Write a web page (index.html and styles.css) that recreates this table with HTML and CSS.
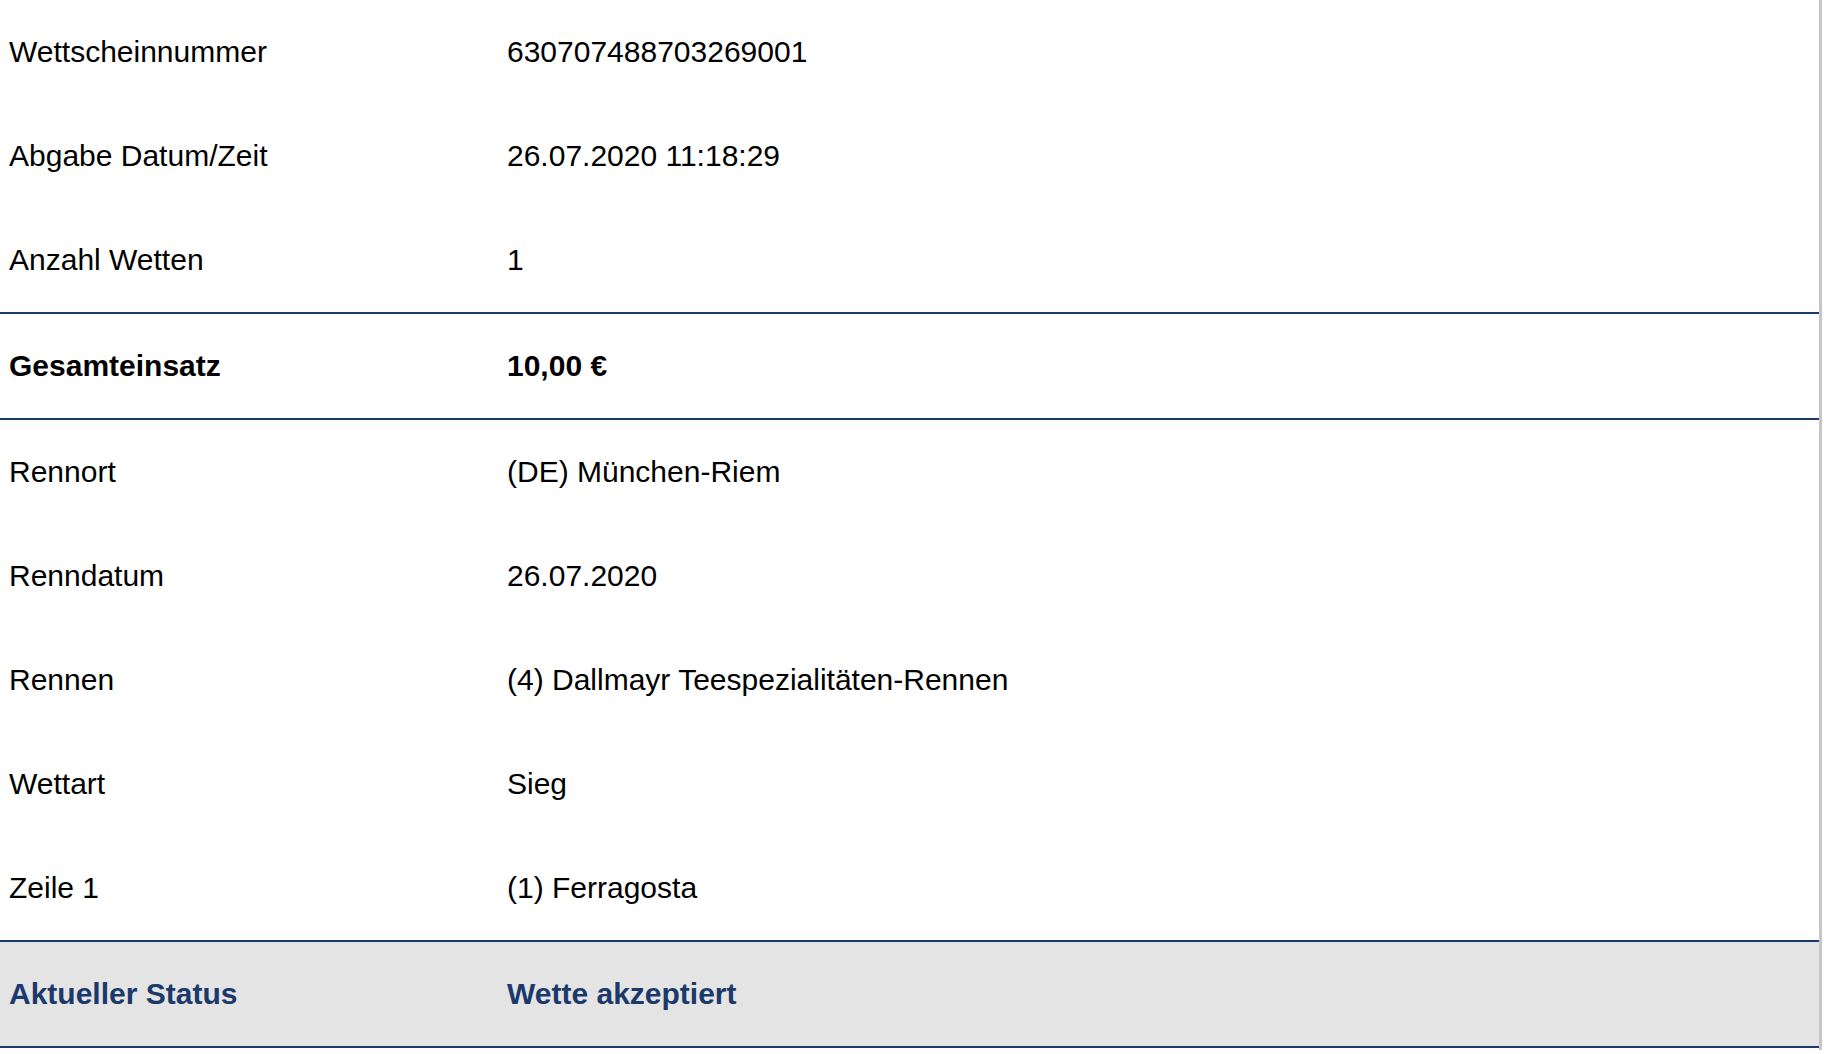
FILE: index.html
```html
<!DOCTYPE html>
<html lang="de">
<head>
<meta charset="utf-8">
<title>Wettschein</title>
<link rel="stylesheet" href="styles.css">
</head>
<body>
<div class="sheet">
  <div class="group">
    <div class="row"><span class="cell">Wettscheinnummer</span><span class="cell">630707488703269001</span></div>
    <div class="row"><span class="cell">Abgabe Datum/Zeit</span><span class="cell">26.07.2020 11:18:29</span></div>
    <div class="row"><span class="cell">Anzahl Wetten</span><span class="cell">1</span></div>
  </div>
  <div class="group ruled">
    <div class="row strong"><span class="cell">Gesamteinsatz</span><span class="cell">10,00 €</span></div>
  </div>
  <div class="group ruled">
    <div class="row"><span class="cell">Rennort</span><span class="cell">(DE) München-Riem</span></div>
    <div class="row"><span class="cell">Renndatum</span><span class="cell">26.07.2020</span></div>
    <div class="row"><span class="cell">Rennen</span><span class="cell">(4) Dallmayr Teespezialitäten-Rennen</span></div>
    <div class="row"><span class="cell">Wettart</span><span class="cell">Sieg</span></div>
    <div class="row"><span class="cell">Zeile 1</span><span class="cell">(1) Ferragosta</span></div>
  </div>
  <div class="group ruled status">
    <div class="row strong"><span class="cell">Aktueller Status</span><span class="cell">Wette akzeptiert</span></div>
  </div>
</div>
</body>
</html>
```
FILE: styles.css
```css
html, body {
  margin: 0;
  padding: 0;
  background: #ffffff;
}
body {
  font-family: "Liberation Sans", Arial, Helvetica, sans-serif;
  color: #000000;
}
.sheet {
  width: 1819px;
  height: 1050px;
  border-right: 3px solid #c6c6c6;
  display: flex;
  flex-direction: column;
}
.group {
  display: flex;
  flex-direction: column;
}
.ruled {
  border-top: 2px solid #1b3a6b;
}
.status {
  background: #e4e4e4;
  border-bottom: 2px solid #1b3a6b;
  color: #1b3a6b;
}
.row {
  height: 104px;
  display: grid;
  grid-template-columns: 498px 1fr;
  align-items: center;
  padding-left: 9px;
  box-sizing: border-box;
}
.cell {
  font-size: 30px;
  line-height: 34px;
  white-space: nowrap;
}
.strong .cell {
  font-weight: bold;
}
```
